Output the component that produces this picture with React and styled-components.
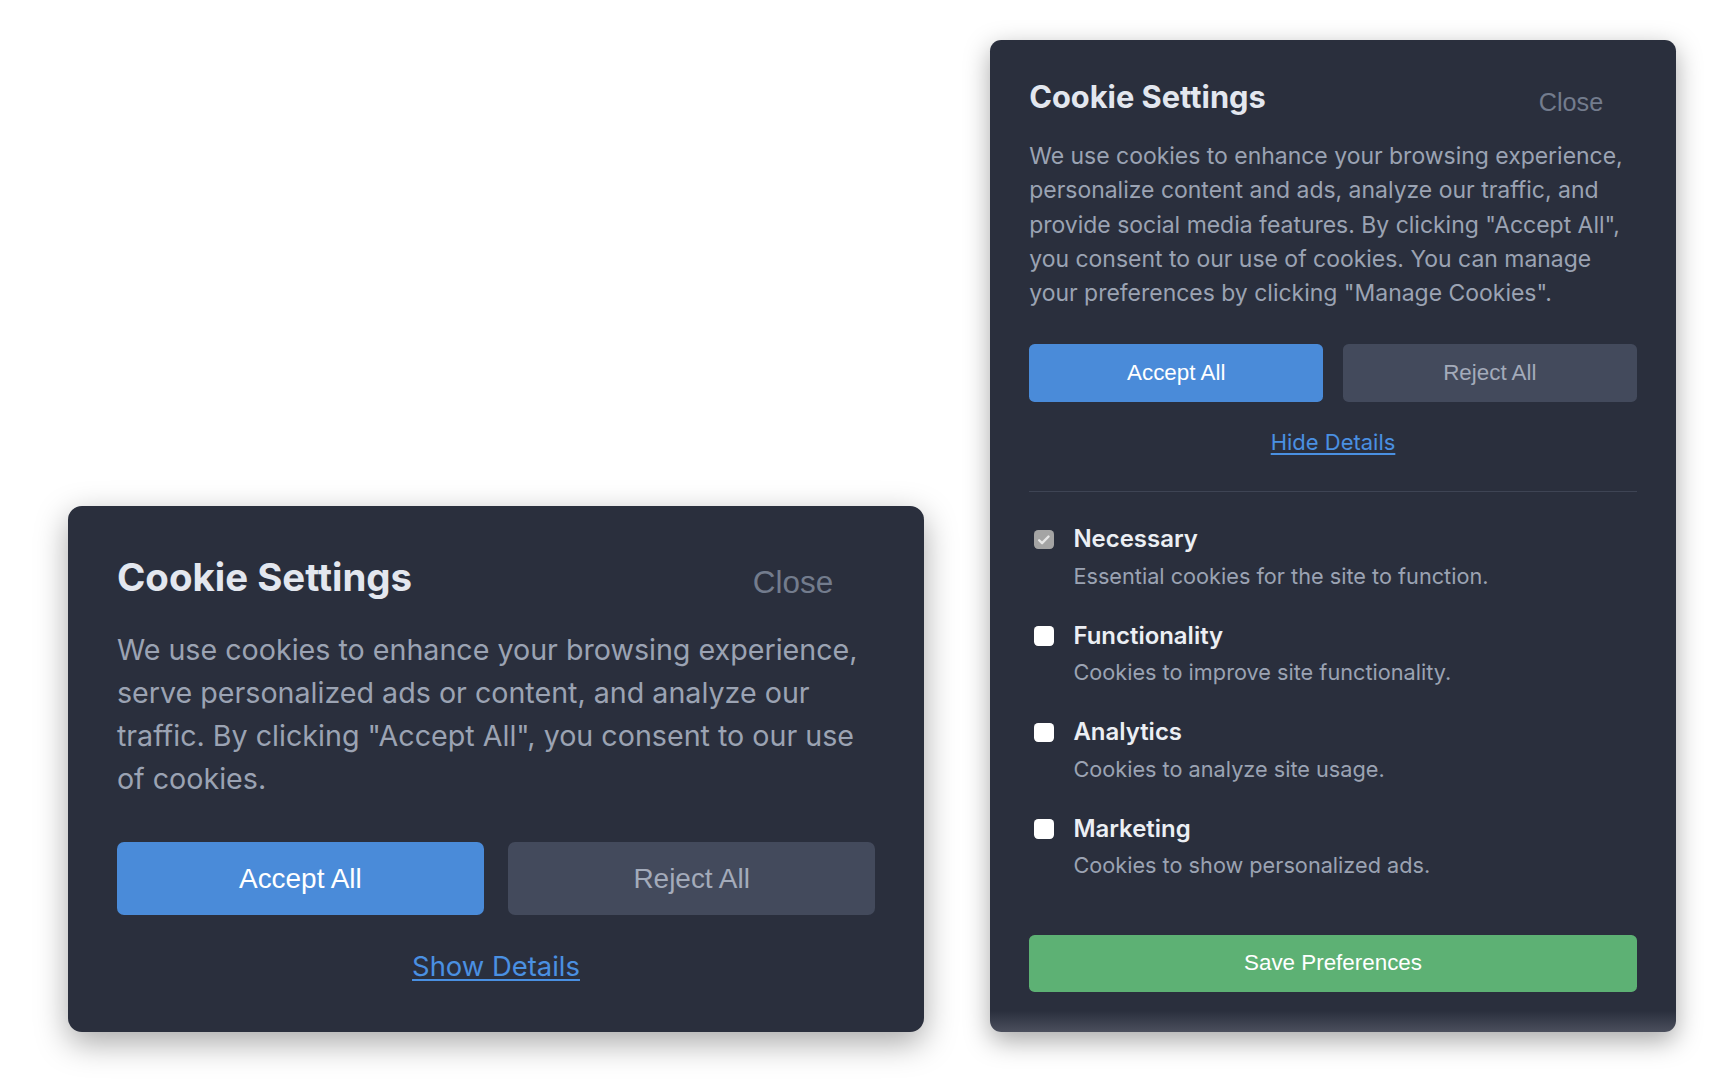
import React from "react";
import styled, { createGlobalStyle, css } from "styled-components";

const GlobalStyle = createGlobalStyle`
  html, body { margin: 0; padding: 0; background: #ffffff; }
  * { box-sizing: border-box; }
`;

const u = (v) => ({ $s }) => `${(v * $s).toFixed(2)}px`;

const Page = styled.div`
  display: flex;
  align-items: flex-end;
  gap: 66px;
  padding: 40px 0 48px 68px;
`;

const Card = styled.section`
  width: ${u(490)};
  padding: ${u(28)};
  border-radius: ${u(8)};
  background: #2a2f3d;
  box-shadow: 0 ${u(6)} ${u(18)} rgba(0, 0, 0, 0.34);
  font-family: Inter, "Noto Sans", sans-serif;
  ${({ $expanded, $s }) =>
    $expanded &&
    css`
      background: linear-gradient(
        to bottom,
        #2a2f3d calc(100% - ${15 * $s}px),
        #4b4f5d 100%
      );
    `}
`;

const Header = styled.div`
  display: flex;
  justify-content: space-between;
  align-items: flex-start;
`;

const Title = styled.h2`
  margin: 0;
  font-size: ${u(22)};
  line-height: 1.15;
  font-weight: 700;
  color: #e3e7ef;
`;

const CloseButton = styled.button`
  border: none;
  background: none;
  padding: ${u(6)} ${u(24)};
  font-family: "Liberation Sans", Arial, sans-serif;
  font-size: ${u(18)};
  color: #737c8d;
  cursor: pointer;
`;

const Text = styled.p`
  margin: ${u(10)} 0 ${u(24)};
  font-size: ${u(16.4)};
  line-height: ${u(24.5)};
  color: #9ba3b3;
`;

const ButtonRow = styled.div`
  display: flex;
  gap: ${u(14)};
`;

const ActionButton = styled.button`
  flex: 1;
  height: ${u(41.4)};
  border: none;
  border-radius: ${u(4)};
  font-family: "Liberation Sans", Arial, sans-serif;
  font-size: ${u(16)};
  cursor: pointer;
  background: ${({ $primary }) => ($primary ? "#4a8bd9" : "#434a5c")};
  color: ${({ $primary }) => ($primary ? "#ffffff" : "#a3abba")};
`;

const ToggleLink = styled.button`
  display: block;
  margin: ${u(19.5)} auto 0;
  padding: 0;
  border: none;
  background: none;
  font-family: Inter, "Noto Sans", sans-serif;
  font-size: ${u(15.7)};
  color: #4a90e2;
  text-decoration: underline;
  text-underline-offset: ${u(2)};
  cursor: pointer;
`;

const Details = styled.div`
  margin-top: ${u(25.5)};
  padding-top: ${u(22.5)};
  border-top: 1px solid #3e4454;
`;

const OptionList = styled.div`
  display: flex;
  flex-direction: column;
  gap: ${u(21)};
`;

const Option = styled.label`
  display: flex;
  align-items: flex-start;
  gap: ${u(14)};
`;

const Box = styled.span`
  flex: none;
  display: flex;
  align-items: center;
  justify-content: center;
  width: ${u(14)};
  height: ${u(14)};
  margin-left: ${u(3.6)};
  margin-top: ${u(4.5)};
  border-radius: ${u(3)};
  background: ${({ $checked }) => ($checked ? "#a4a4a4" : "#ffffff")};
  svg {
    width: 80%;
    height: 80%;
  }
`;

const OptionText = styled.div`
  display: flex;
  flex-direction: column;
  gap: ${u(4.5)};
`;

const OptionLabel = styled.span`
  font-size: ${u(17.1)};
  line-height: ${u(22.9)};
  font-weight: 600;
  color: #eceff4;
`;

const OptionDesc = styled.span`
  font-size: ${u(15.5)};
  line-height: ${u(20.5)};
  color: #9ba3b3;
`;

const SaveButton = styled.button`
  display: block;
  width: 100%;
  height: ${u(41.4)};
  margin-top: ${u(39)};
  border: none;
  border-radius: ${u(4)};
  background: #5db174;
  color: #ffffff;
  font-family: "Liberation Sans", Arial, sans-serif;
  font-size: ${u(16)};
  cursor: pointer;
`;

const options = [
  { name: "Necessary", desc: "Essential cookies for the site to function.", locked: true },
  { name: "Functionality", desc: "Cookies to improve site functionality." },
  { name: "Analytics", desc: "Cookies to analyze site usage." },
  { name: "Marketing", desc: "Cookies to show personalized ads." },
];

function CheckMark() {
  return (
    <svg viewBox="0 0 16 16" fill="none">
      <path d="M3.2 8.4l3 3L12.8 4.6" stroke="#e6e6e6" strokeWidth="2.4" strokeLinecap="round" strokeLinejoin="round" />
    </svg>
  );
}

function CookieCard({ s, expanded, text }) {
  return (
    <Card $s={s} $expanded={expanded}>
      <Header>
        <Title $s={s}>Cookie Settings</Title>
        <CloseButton $s={s}>Close</CloseButton>
      </Header>
      <Text $s={s}>{text}</Text>
      <ButtonRow $s={s}>
        <ActionButton $s={s} $primary>Accept All</ActionButton>
        <ActionButton $s={s}>Reject All</ActionButton>
      </ButtonRow>
      <ToggleLink $s={s}>{expanded ? "Hide Details" : "Show Details"}</ToggleLink>
      {expanded && (
        <Details $s={s}>
          <OptionList $s={s}>
            {options.map((o) => (
              <Option key={o.name} $s={s}>
                <Box $s={s} $checked={o.locked}>{o.locked && <CheckMark />}</Box>
                <OptionText $s={s}>
                  <OptionLabel $s={s}>{o.name}</OptionLabel>
                  <OptionDesc $s={s}>{o.desc}</OptionDesc>
                </OptionText>
              </Option>
            ))}
          </OptionList>
          <SaveButton $s={s}>Save Preferences</SaveButton>
        </Details>
      )}
    </Card>
  );
}

export default function App() {
  return (
    <>
      <GlobalStyle />
      <Page>
        <CookieCard
          s={1.747}
          text={'We use cookies to enhance your browsing experience, serve personalized ads or content, and analyze our traffic. By clicking "Accept All", you consent to our use of cookies.'}
        />
        <CookieCard
          s={1.4}
          expanded
          text={'We use cookies to enhance your browsing experience, personalize content and ads, analyze our traffic, and provide social media features. By clicking "Accept All", you consent to our use of cookies. You can manage your preferences by clicking "Manage Cookies".'}
        />
      </Page>
    </>
  );
}
